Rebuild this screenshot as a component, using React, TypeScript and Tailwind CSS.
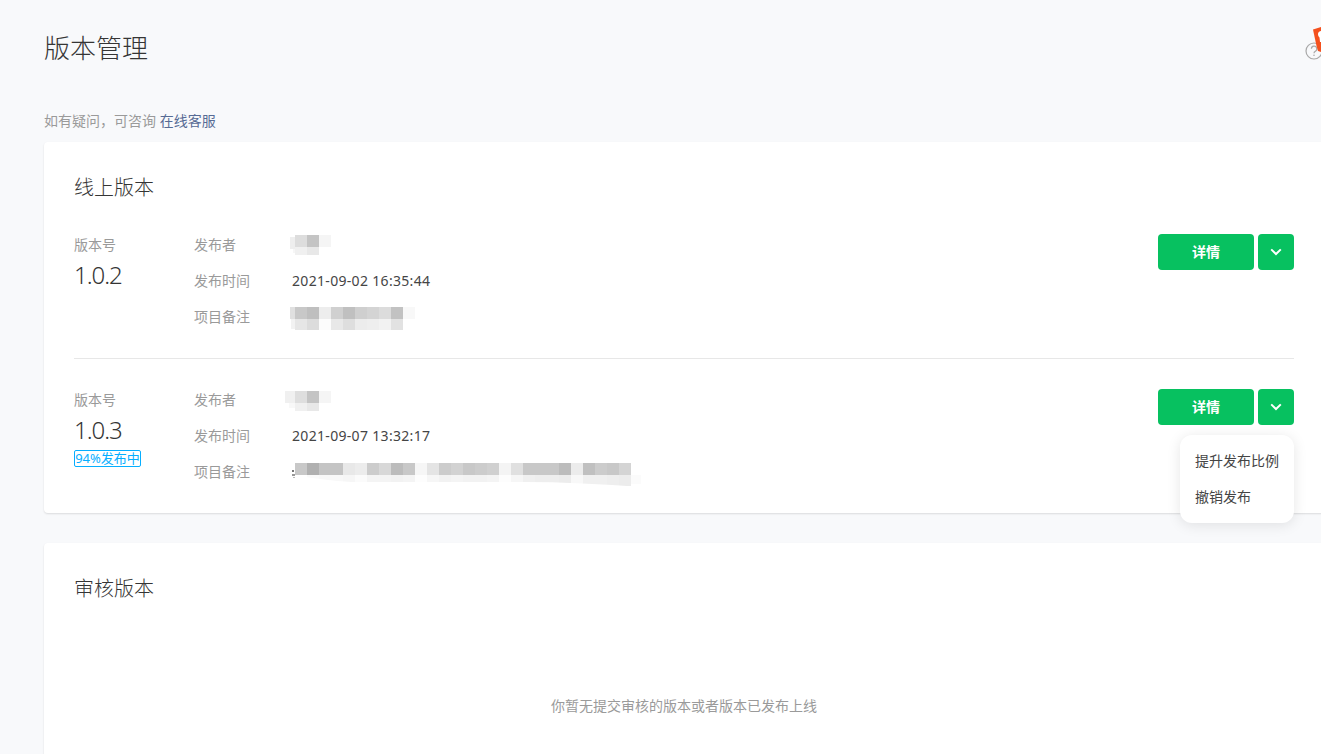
type Block = { x: number; y: number; w: number; h: number; c: string };

const FONT = "font-['Noto_Sans','Noto_Sans_CJK_SC',sans-serif]";

// blurred-out text in the screenshot: two rows of 12px squares
function cells(x0: number, y: number, h: number, colors: string[]): Block[] {
  return colors.map((c, i) => ({ x: x0 + i * 12, y, w: 12, h, c }));
}

const publisher1 = [
  { x: -2, y: 10, w: 5, h: 12, c: "#eeeeee" },
  { x: 1, y: 22, w: 2, h: 4, c: "#f6f6f6" },
  ...cells(3, 8, 12, ["#dddddd", "#c4c4c4", "#f5f5f5"]),
  ...cells(3, 20, 8, ["#f0f0f0", "#e8e8e8"]),
];

const note1 = [
  { x: -2, y: 8, w: 5, h: 12, c: "#e0e0e0" },
  { x: -1, y: 20, w: 4, h: 10, c: "#f2f2f2" },
  ...cells(3, 8, 12, ["#c8c8c8", "#bfbfbf", "#ededed", "#d0d0d0", "#c0c0c0", "#cfcfcf", "#d4d4d4", "#dcdcdc", "#c2c2c2", "#f8f8f8"]),
  ...cells(3, 20, 11, ["#e6e6e6", "#dcdcdc", "#fcfcfc", "#e8e8e8", "#dedede", "#ececec", "#eeeeee", "#f2f2f2", "#e2e2e2"]),
];

const publisher2 = [
  { x: -7, y: 9, w: 10, h: 12, c: "#f0f0f0" },
  { x: -3, y: 21, w: 6, h: 5, c: "#f8f8f8" },
  ...cells(3, 9, 12, ["#dedede", "#c4c4c4", "#f5f5f5"]),
  ...cells(3, 21, 8, ["#f0f0f0", "#e8e8e8"]),
];

const note2 = [
  ...cells(3, 9, 12, [
    "#c8c8c8", "#b0b0b0", "#c4c4c4", "#c4c4c4", "#e8e8e8", "#ececec", "#cccccc",
    "#d8d8d8", "#bcbcbc", "#c8c8c8", "#f6f6f6", "#e4e4e4", "#cccccc", "#d2d2d2",
    "#c8c8c8", "#cccccc", "#d0d0d0", "#f4f4f4", "#e0e0e0", "#c8c8c8", "#c8c8c8",
    "#c8c8c8", "#bcbcbc", "#ececec", "#c0c0c0", "#cccccc", "#c8c8c8", "#d4d4d4",
  ]),
  ...cells(3, 21, 11, [
    "#ffffff", "#fafafa", "#f8f8f8", "#f8f8f8", "#f6f6f6", "#fbfbfb", "#f4f4f4",
    "#f4f4f4", "#f2f2f2", "#f4f4f4", "#fdfdfd", "#f6f6f6", "#f2f2f2", "#f4f4f4",
    "#f2f2f2", "#f2f2f2", "#f4f4f4", "#fdfdfd", "#f6f6f6", "#f0f0f0", "#eeeeee",
    "#eeeeee", "#ececec", "#f8f8f8", "#f0f0f0", "#f0f0f0", "#eeeeee", "#ececec",
  ]),
  { x: 339, y: 21, w: 10, h: 9, c: "#fbfbfb" },
];

function Mosaic({ blocks, wave }: { blocks: Block[]; wave?: boolean }) {
  return (
    <svg className="block h-9 w-full overflow-visible">
      {blocks.map((b, i) => (
        <rect key={i} x={b.x} y={b.y} width={b.w} height={b.h} fill={b.c} />
      ))}
      {wave && (
        <>
          <path d="M0 21 C20 24 40 27 60 28 L230 28 C270 28 310 30 350 33 L350 34 L0 34 Z" fill="#ffffff" />
          <rect x="0" y="16" width="2" height="2" fill="#777777" />
          <rect x="0" y="20" width="3" height="2" fill="#999999" />
          <rect x="1" y="23" width="2" height="1" fill="#bbbbbb" />
        </>
      )}
    </svg>
  );
}

function InfoRow({ label, children }: { label: string; children: React.ReactNode }) {
  return (
    <div className="flex h-9 items-center">
      <div className="w-[98px] shrink-0 text-[#9a9a9a]">{label}</div>
      <div className="flex-1 text-[#454545]">{children}</div>
    </div>
  );
}

function Chevron() {
  return (
    <svg width="12" height="8" viewBox="0 0 12 8" fill="none">
      <path d="M1.2 1.4 6 6 10.8 1.4" stroke="#ffffff" strokeWidth="2" />
    </svg>
  );
}

function VersionRow(props: {
  version: string;
  time: string;
  publisher: Block[];
  note: Block[];
  wave?: boolean;
  badge?: string;
  menu?: boolean;
}) {
  return (
    <div className="flex h-[108px] text-sm">
      <div className="w-[120px] shrink-0">
        <div className="flex h-9 items-center text-[#9a9a9a]">版本号</div>
        <div className="text-2xl leading-6 font-light tracking-[-1px] text-[#353535]">{props.version}</div>
        {props.badge && (
          <div className="mt-2 flex h-[17px] w-[67px] items-center justify-center rounded-[2px] border border-[#06aeff] text-[13px] text-[#06aeff]">
            {props.badge}
          </div>
        )}
      </div>
      <div className="w-[500px]">
        <InfoRow label="发布者">
          <Mosaic blocks={props.publisher} />
        </InfoRow>
        <InfoRow label="发布时间">
          <span className="tracking-[0.32px]">{props.time}</span>
        </InfoRow>
        <InfoRow label="项目备注">
          <Mosaic blocks={props.note} wave={props.wave} />
        </InfoRow>
      </div>
      <div className="relative mt-[7px] ml-auto flex h-9 gap-1">
        <button className="h-9 w-24 rounded bg-[#07c160] text-sm font-semibold text-white">详情</button>
        <button className="flex h-9 w-9 items-center justify-center rounded bg-[#07c160]">
          <Chevron />
        </button>
        {props.menu && (
          <div className="absolute top-[46px] right-0 z-10 w-[114px] rounded-xl bg-white py-2 text-[#454545] shadow-[0_2px_14px_rgba(0,0,0,0.1)]">
            <div className="h-9 pl-[15px] leading-9">提升发布比例</div>
            <div className="h-9 pl-[15px] leading-9">撤销发布</div>
          </div>
        )}
      </div>
    </div>
  );
}

export default function App() {
  return (
    <div className={`relative h-[754px] w-[1321px] overflow-hidden bg-[#f8f9fb] pt-[30px] pl-11 ${FONT}`}>
      <h1 className="h-9 text-[26px] leading-9 font-light text-[#353535]">版本管理</h1>

      <div className="mt-[45px] mb-[11px] text-sm leading-5 text-[#9a9a9a]">
        如有疑问，可咨询 <a className="text-[#576b95]">在线客服</a>
      </div>

      <div className="w-[1280px] rounded bg-white px-[30px] pt-[30px] pb-[23px] shadow-[0_1px_2px_rgba(0,0,0,0.12)]">
        <h2 className="mb-[23px] h-8 text-xl leading-8 font-light text-[#353535]">线上版本</h2>
        <VersionRow version="1.0.2" time="2021-09-02 16:35:44" publisher={publisher1} note={note1} />
        <div className="mt-[23px] mb-[23px] h-px bg-[#e7e7e7]" />
        <VersionRow
          version="1.0.3"
          time="2021-09-07 13:32:17"
          publisher={publisher2}
          note={note2}
          wave
          badge="94%发布中"
          menu
        />
      </div>

      <div className="mt-[30px] h-[300px] w-[1280px] rounded bg-white px-[30px] pt-[30px] shadow-[0_1px_2px_rgba(0,0,0,0.12)]">
        <h2 className="h-8 text-xl leading-8 font-light text-[#353535]">审核版本</h2>
        <div className="mt-[91px] text-center text-sm leading-5 text-[#9a9a9a]">你暂无提交审核的版本或者版本已发布上线</div>
      </div>

      {/* help icon with the orange bookmark stuck on top, cut off by the window */}
      <svg className="absolute top-6 left-[1300px]" width="21" height="40" viewBox="0 0 21 40" fill="none">
        <circle cx="14" cy="27" r="8" stroke="#a8a8a8" strokeWidth="1.2" fill="#f8f9fb" />
        <path d="M11.4 24.8a2.7 2.7 0 1 1 4 2.4c-.9.5-1.4 1-1.4 2" stroke="#a8a8a8" strokeWidth="1.2" />
        <circle cx="14" cy="31.2" r="0.8" fill="#a8a8a8" />
        <path d="M13 5.5 21 3V28L18 27 16.5 22Z" fill="#f4511e" />
        <path d="M18 10C18 8.2 19.5 7.2 21 7V18H20L19.5 13.5C18.6 12.6 18 11.4 18 10Z" fill="#ffffff" />
      </svg>
    </div>
  );
}
